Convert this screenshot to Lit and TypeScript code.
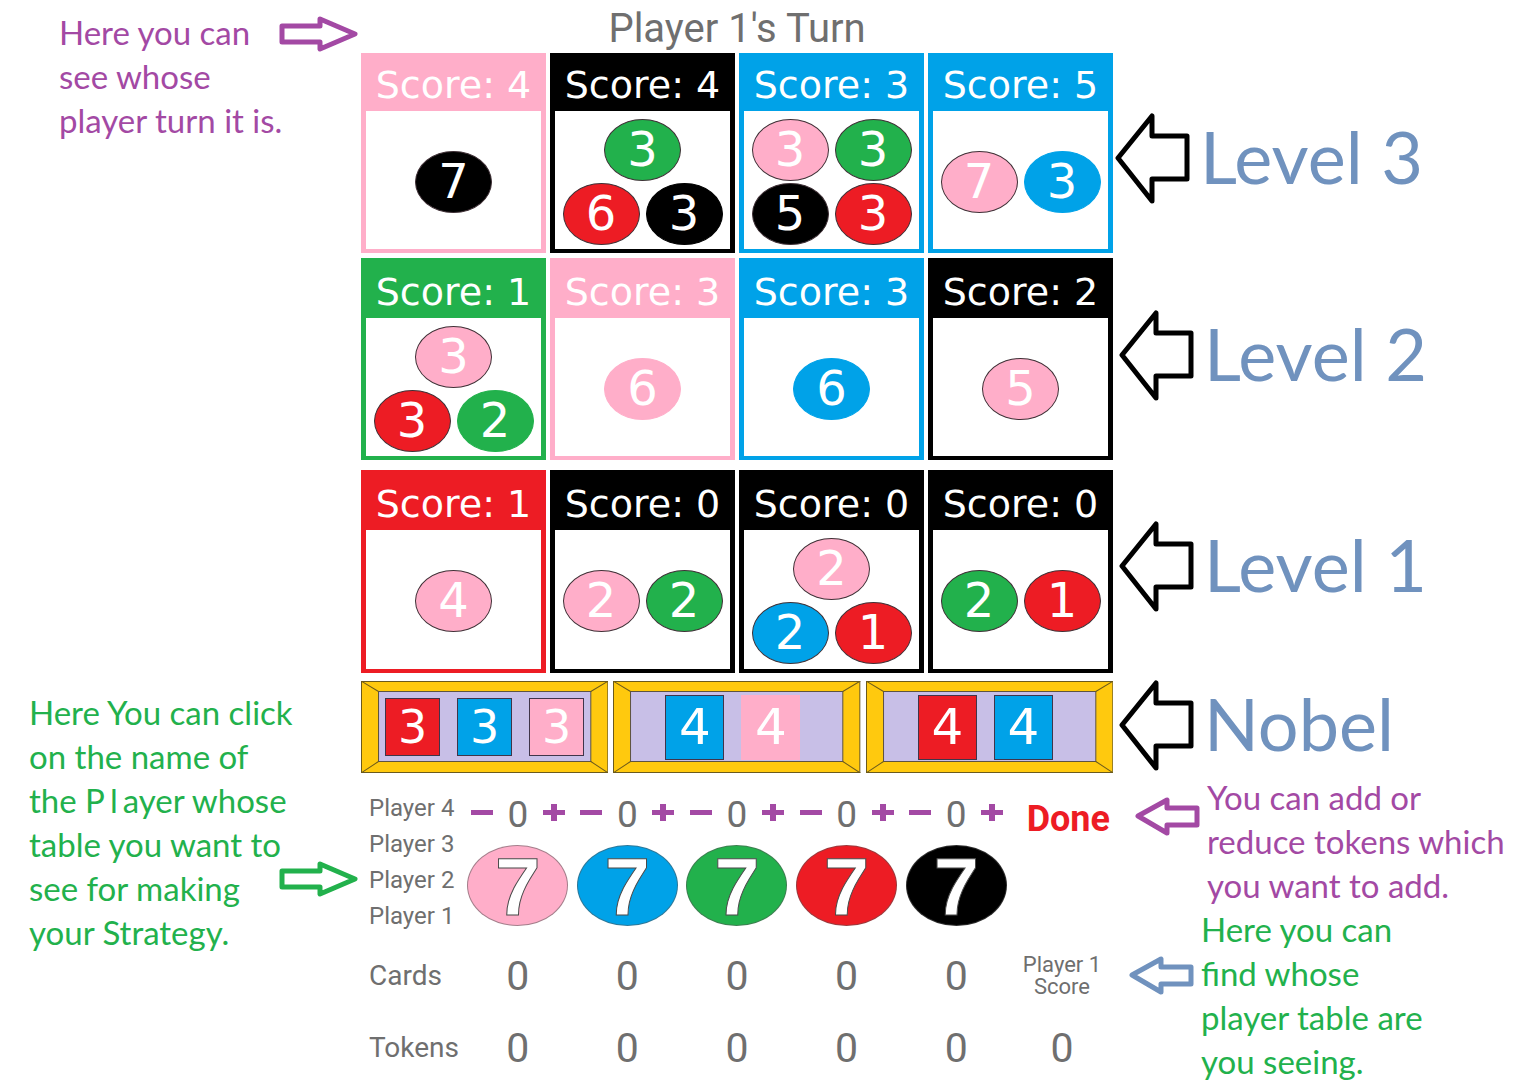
import { LitElement, html, svg, css } from "lit";
import { customElement, property, state } from "lit/decorators.js";
import { classMap } from "lit/directives/class-map.js";

type Gem = "pink" | "blue" | "green" | "red" | "black";

interface Cost {
  gem: Gem;
  count: number;
}

interface CardData {
  gem: Gem;
  score: number;
  cost: Cost[];
}

const cost = (gem: Gem, count: number): Cost => ({ gem, count });

const GEMS: Gem[] = ["pink", "blue", "green", "red", "black"];

const LEVELS: { name: string; cards: CardData[] }[] = [
  {
    name: "Level 3",
    cards: [
      { gem: "pink", score: 4, cost: [cost("black", 7)] },
      { gem: "black", score: 4, cost: [cost("green", 3), cost("red", 6), cost("black", 3)] },
      { gem: "blue", score: 3, cost: [cost("pink", 3), cost("green", 3), cost("black", 5), cost("red", 3)] },
      { gem: "blue", score: 5, cost: [cost("pink", 7), cost("blue", 3)] },
    ],
  },
  {
    name: "Level 2",
    cards: [
      { gem: "green", score: 1, cost: [cost("pink", 3), cost("red", 3), cost("green", 2)] },
      { gem: "pink", score: 3, cost: [cost("pink", 6)] },
      { gem: "blue", score: 3, cost: [cost("blue", 6)] },
      { gem: "black", score: 2, cost: [cost("pink", 5)] },
    ],
  },
  {
    name: "Level 1",
    cards: [
      { gem: "red", score: 1, cost: [cost("pink", 4)] },
      { gem: "black", score: 0, cost: [cost("pink", 2), cost("green", 2)] },
      { gem: "black", score: 0, cost: [cost("pink", 2), cost("blue", 2), cost("red", 1)] },
      { gem: "black", score: 0, cost: [cost("green", 2), cost("red", 1)] },
    ],
  },
];

const NOBLES: Cost[][] = [
  [cost("red", 3), cost("blue", 3), cost("pink", 3)],
  [cost("blue", 4), cost("pink", 4)],
  [cost("red", 4), cost("blue", 4)],
];

const gemColors = css`
  .pink { --gem: #ffaec9; }
  .blue { --gem: #00a2e8; }
  .green { --gem: #22b14c; }
  .red { --gem: #ed1c24; }
  .black { --gem: #000000; }
`;

/** A development card: score banner above its token cost. */
@customElement("gem-card")
export class GemCard extends LitElement {
  @property({ attribute: false }) card!: CardData;

  static styles = [
    gemColors,
    css`
      :host { display: block; min-width: 0; }
      .card {
        box-sizing: border-box;
        height: 100%;
        display: flex;
        flex-direction: column;
        padding: 0 5px 4px;
        background: var(--gem);
        font-family: "DejaVu Sans", sans-serif;
        color: #fff;
      }
      .score {
        padding-top: var(--banner-pad, 6px);
        text-align: center;
        font-size: 38px;
        line-height: 52px;
        white-space: nowrap;
      }
      .cost {
        flex: 1;
        display: flex;
        flex-direction: column;
        justify-content: center;
        gap: 2px;
        padding-top: 3px;
        background: #fff;
      }
      .line {
        display: flex;
        justify-content: center;
        gap: 6px;
      }
      .pip {
        box-sizing: border-box;
        width: 77px;
        height: 62px;
        border: 1px solid var(--gem);
        border-radius: 50%;
        background: var(--gem);
        text-align: center;
        font-size: 48px;
        line-height: 58px;
      }
      .outlined { border-color: #3f3036; }
    `,
  ];

  render() {
    const { gem, score, cost } = this.card;
    const split = cost.length > 2 ? cost.length - 2 : cost.length;
    const lines = [cost.slice(0, split), cost.slice(split)].filter((l) => l.length);
    return html`
      <article class="card ${gem}">
        <div class="score">Score: ${score}</div>
        <div class="cost">
          ${lines.map(
            (line) => html`<div class="line">
              ${line.map(
                (c) => html`<span class=${classMap({ pip: true, [c.gem]: true, outlined: c.gem !== gem })}>${c.count}</span>`
              )}
            </div>`
          )}
        </div>
      </article>
    `;
  }
}

/** A noble tile: bevelled gold frame round the required cards. */
@customElement("noble-tile")
export class NobleTile extends LitElement {
  @property({ attribute: false }) cost: Cost[] = [];

  static styles = [
    gemColors,
    css`
      :host { display: block; min-width: 0; }
      .noble {
        position: relative;
        height: 92px;
        display: flex;
        align-items: center;
        justify-content: center;
        gap: 17px;
        font-family: "DejaVu Sans", sans-serif;
        color: #fff;
      }
      .pair { padding-right: 8px; }
      .frame {
        position: absolute;
        inset: 0;
        width: 100%;
        height: 100%;
      }
      .need {
        position: relative;
        box-sizing: border-box;
        width: 55px;
        height: 58px;
        border: 1px solid #40354a;
        background: var(--gem);
        text-align: center;
        font-size: 46px;
        line-height: 56px;
      }
      .pair .need {
        width: 59px;
        height: 65px;
        font-size: 50px;
        line-height: 62px;
      }
      .pair .pink { border-color: #ffaec9; }
    `,
  ];

  render() {
    return html`
      <article class=${classMap({ noble: true, pair: this.cost.length === 2 })}>
        <svg class="frame" viewBox="0 0 247 92" preserveAspectRatio="none" aria-hidden="true">
          <rect x="0.5" y="0.5" width="246" height="91" fill="#ffc90e" stroke="#6b5a1c" />
          <rect x="17.5" y="10.5" width="212" height="70" fill="#c8bfe7" stroke="#5d5340" />
          <path d="M0 0L17.500 10.500M247 0L229.500 10.500M0 92L17.500 80.500M247 92L229.500 80.500" fill="none" stroke="#6b5a1c" />
        </svg>
        ${this.cost.map((c) => html`<span class="need ${c.gem}">${c.count}</span>`)}
      </article>
    `;
  }
}

const arrowRight = svg`<polygon points="3,10 41,10 41,3 76,18 41,33 41,26 3,26" />`;
const arrowLeft = svg`<polygon points="3,19 32,3 32,11 62,11 62,28 32,28 32,36" />`;
const arrowBig = svg`<polygon points="3,45 37,3 37,23 72,23 72,66 37,66 37,88" />`;

@customElement("app-root")
export class AppRoot extends LitElement {
  @state() private picked = [0, 0, 0, 0, 0];
  @state() private shown = 1;

  static styles = [
    gemColors,
    css`
      :host {
        display: block;
        background: #fff;
        font-family: Roboto, sans-serif;
        color: #6f6f6f;
      }
      button {
        margin: 0;
        padding: 0;
        border: 0;
        background: none;
        font: inherit;
        color: inherit;
        cursor: pointer;
      }
      .page {
        display: grid;
        grid-template-columns: 361fr 752fr 401fr;
        min-height: 100vh;
        overflow: hidden;
      }
      .side, .board { min-width: 0; }

      .note {
        display: flex;
        align-items: flex-start;
        font-family: Lato, sans-serif;
        font-size: 33px;
        line-height: 44px;
        white-space: nowrap;
      }
      .note p { margin: 0; }
      .stray { padding: 0 5px; }
      .purple { color: #a349a4; }
      .leaf { color: #22b14c; }
      .steel { color: #7092be; }
      .arrow {
        flex: none;
        fill: none;
        stroke: currentColor;
        stroke-width: 5;
        stroke-linejoin: round;
      }

      .left .note { justify-content: space-between; padding-right: 3px; }
      .left .arrow { margin-left: -24px; }
      .turn-note { padding: 10px 0 0 59px; }
      .turn-note .arrow { margin-top: 6px; }
      .players-note { margin-top: 548px; padding-left: 29px; }
      .players-note .arrow { margin-top: 171px; }

      .turn {
        margin: 0;
        height: 53px;
        text-align: center;
        font-size: 40px;
        font-weight: 400;
        line-height: 58px;
      }
      .level {
        display: grid;
        grid-template-columns: repeat(4, 1fr);
        gap: 4px;
        height: 205px;
        box-sizing: border-box;
        padding-bottom: 5px;
      }
      .level-2, .level-1 { --banner-pad: 8px; }
      .level-2 { height: 212px; padding-bottom: 10px; }
      .level-1 { height: 211px; padding-bottom: 8px; }
      .nobles {
        display: grid;
        grid-template-columns: repeat(3, 1fr);
        gap: 5px;
      }

      .bank {
        display: grid;
        grid-template-columns: 102px repeat(5, 1fr) 102px;
        height: 167px;
      }
      .players {
        display: flex;
        flex-direction: column;
        align-items: flex-start;
        padding: 17px 0 0 8px;
        font-size: 24px;
        line-height: 36px;
        white-space: nowrap;
      }
      .pile {
        display: flex;
        flex-direction: column;
        align-items: center;
        padding-top: 22px;
      }
      .stepper {
        display: flex;
        align-items: center;
        justify-content: space-between;
        width: 96px;
        height: 40px;
        margin-bottom: 10px;
        font-size: 37px;
        line-height: 42px;
      }
      .step {
        width: 24px;
        height: 30px;
        padding-bottom: 6px;
        color: #a349a4;
      }
      .step svg { display: block; fill: currentColor; }
      .chip {
        box-sizing: border-box;
        width: 101px;
        height: 81px;
        border: 1px solid #55555588;
        border-radius: 50%;
        background: var(--gem);
        text-align: center;
        font-family: "Liberation Sans", sans-serif;
        font-size: 82px;
        font-weight: 700;
        line-height: 81px;
        color: #fff;
        -webkit-text-stroke: 1px #4a4a4a;
      }
      .done {
        align-self: start;
        justify-self: end;
        margin: 24px 3px 0 0;
        font-size: 36px;
        font-weight: 700;
        line-height: 44px;
        color: #ed1c24;
      }

      .holdings {
        width: 100%;
        table-layout: fixed;
        border-collapse: collapse;
      }
      .holdings tr { height: 72px; }
      .holdings th, .holdings td {
        padding: 0;
        text-align: center;
        font-weight: 400;
        font-size: 41px;
        line-height: 44px;
      }
      .holdings .label-col { width: 102px; }
      .holdings .row-name {
        padding-left: 8px;
        text-align: left;
        font-size: 28px;
      }
      .holdings .score-name {
        font-size: 22px;
        line-height: 22px;
      }

      .callout {
        display: flex;
        align-items: center;
        gap: 10px;
        padding-left: 6px;
        font-family: Lato, sans-serif;
        font-size: 72px;
        line-height: 82px;
        white-space: nowrap;
        color: #7092be;
      }
      .callout span { padding-bottom: 6px; }
      .callout .arrow { color: #000; }
      .at-3 { margin-top: 113px; padding-left: 2px; }
      .at-2 { margin-top: 106px; }
      .at-1 { margin-top: 120px; }
      .at-nobles { margin-top: 68px; }
      .right .note { gap: 7px; }
      .add-note { margin-top: 4px; padding-left: 22px; }
      .add-note .arrow { margin-top: 22px; }
      .score-note { padding-left: 16px; }
      .score-note .arrow { margin-top: 49px; }
    `,
  ];

  private step(index: number, by: number) {
    this.picked = this.picked.map((n, i) => (i === index ? Math.max(0, n + by) : n));
  }

  private bigArrow() {
    return html`<svg class="arrow" width="75" height="91" viewBox="0 0 75 91" aria-hidden="true">${arrowBig}</svg>`;
  }

  private rightArrow() {
    return html`<svg class="arrow" width="79" height="36" viewBox="0 0 79 36" aria-hidden="true">${arrowRight}</svg>`;
  }

  private leftArrow(color = "") {
    return html`<svg class="arrow ${color}" width="65" height="39" viewBox="0 0 65 39" aria-hidden="true">${arrowLeft}</svg>`;
  }

  private renderPile(gem: Gem, i: number) {
    return html`
      <div class="pile">
        <div class="stepper">
          <button class="step" aria-label="Remove ${gem}" @click=${() => this.step(i, -1)}>
            <svg width="24" height="24" viewBox="0 0 24 24"><rect x="1" y="10" width="22" height="5" /></svg>
          </button>
          <output>${this.picked[i]}</output>
          <button class="step" aria-label="Add ${gem}" @click=${() => this.step(i, 1)}>
            <svg width="24" height="24" viewBox="0 0 24 24"><path d="M1 10H9V4H15V10H23V15H15V21H9V15H1Z" /></svg>
          </button>
        </div>
        <div class="chip ${gem}">7</div>
      </div>
    `;
  }

  render() {
    return html`
      <div class="page">
        <aside class="side left">
          <div class="note purple turn-note">
            <p>Here you can<br />see whose<br />player turn it is.</p>
            ${this.rightArrow()}
          </div>
          <div class="note leaf players-note">
            <p>Here You can click<br />on the name of<br />the P<span class="stray">l</span>ayer whose<br />table you want to<br />see for making<br />your Strategy.</p>
            ${this.rightArrow()}
          </div>
        </aside>

        <main class="board">
          <h1 class="turn">Player 1's Turn</h1>
          ${LEVELS.map(
            (level, i) => html`<section class="level level-${3 - i}" aria-label=${level.name}>
              ${level.cards.map((card) => html`<gem-card .card=${card}></gem-card>`)}
            </section>`
          )}
          <section class="nobles" aria-label="Nobel">
            ${NOBLES.map((n) => html`<noble-tile .cost=${n}></noble-tile>`)}
          </section>
          <section class="bank">
            <nav class="players">
              ${[4, 3, 2, 1].map((n) => html`<button @click=${() => (this.shown = n)}>Player ${n}</button>`)}
            </nav>
            ${GEMS.map((gem, i) => this.renderPile(gem, i))}
            <button class="done">Done</button>
          </section>
          <table class="holdings">
            <colgroup>
              <col class="label-col" />
              <col span="5" />
              <col class="label-col" />
            </colgroup>
            <tbody>
              <tr>
                <th class="row-name" scope="row">Cards</th>
                ${GEMS.map(() => html`<td>0</td>`)}
                <th class="score-name" scope="col">Player ${this.shown}<br />Score</th>
              </tr>
              <tr>
                <th class="row-name" scope="row">Tokens</th>
                ${GEMS.map(() => html`<td>0</td>`)}
                <td>0</td>
              </tr>
            </tbody>
          </table>
        </main>

        <aside class="side right">
          <div class="callout at-3">${this.bigArrow()}<span>Level 3</span></div>
          <div class="callout at-2">${this.bigArrow()}<span>Level 2</span></div>
          <div class="callout at-1">${this.bigArrow()}<span>Level 1</span></div>
          <div class="callout at-nobles">${this.bigArrow()}<span>Nobel</span></div>
          <div class="note purple add-note">
            ${this.leftArrow()}
            <p>You can add or<br />reduce tokens which<br />you want to add.</p>
          </div>
          <div class="note leaf score-note">
            ${this.leftArrow("steel")}
            <p>Here you can<br />find whose<br />player table are<br />you seeing.</p>
          </div>
        </aside>
      </div>
    `;
  }
}
